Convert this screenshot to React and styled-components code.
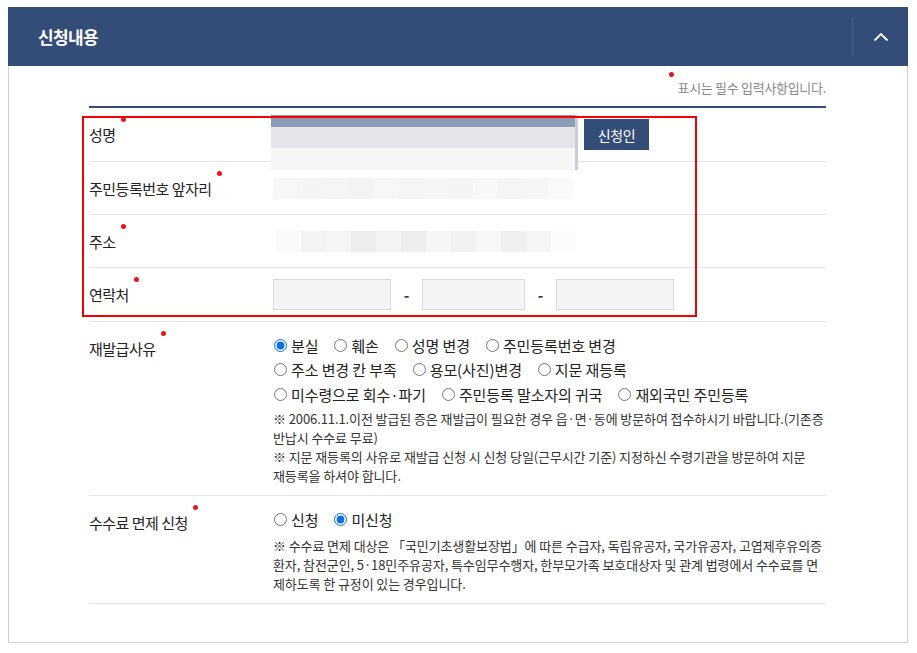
import React from 'react'
import styled, { createGlobalStyle } from 'styled-components'

const Global = createGlobalStyle`
body {
  margin: 0;
  background: #fff;
  font-family: 'Noto Sans CJK KR', 'Noto Sans', sans-serif;
  color: #222;
}
`

const Page = styled.div`
padding: 7px 9px 10px 8px;
`

const Panel = styled.section`
width: 900px;
height: 636px;
box-sizing: border-box;
border: 1px solid #cfcfcf;
border-top: none;
`

const Header = styled.div`
height: 59px;
background: #344c78;
display: flex;
align-items: center;
justify-content: space-between;
margin: 0 -1px;
`

const Title = styled.h2`
margin: 0 0 0 30px;
color: #fff;
font-size: 17px;
font-weight: 700;
letter-spacing: -0.6px;
`

const Toggle = styled.div`
width: 55px;
height: 38px;
border-left: 1px solid #4a5f88;
display: flex;
align-items: center;
justify-content: center;
`

const Body = styled.div`
padding: 0 81px 0 80px;
`

const Note = styled.p`
margin: 0;
height: 38px;
display: flex;
justify-content: flex-end;
align-items: center;
padding-top: 2px;
font-size: 13px;
color: #888;
letter-spacing: -0.3px;
`

const Dot = styled.span`
display: inline-block;
width: 5px;
height: 5px;
border-radius: 50%;
background: #e8141c;
margin: 0 4px 0 ${p => p.$gap || 3}px;
align-self: flex-start;
transform: translateY(${p => p.$up || 0}px);
`

const Table = styled.div`
position: relative;
border-top: 2px solid #344c78;
`

const Row = styled.div`
display: grid;
grid-template-columns: 184px 1fr;
border-bottom: 1px solid #e6e6e6;
min-height: ${p => p.$h || 52}px;
`

const Label = styled.div`
display: flex;
align-items: ${p => (p.$top ? 'flex-start' : 'center')};
padding-top: ${p => p.$pt || 0}px;
font-size: 15px;
color: #222;
letter-spacing: -0.5px;
`

const LabelText = styled.span`
display: inline-flex;
align-items: flex-start;
`

const Cell = styled.div`
display: flex;
align-items: ${p => p.$align || 'center'};
flex-direction: ${p => p.$col ? 'column' : 'row'};
padding: ${p => p.$pad || '0'};
`

const NameBox = styled.div`
width: 307px;
height: 55px;
align-self: flex-start;
margin: 7px 0 -9px -2px;
background: linear-gradient(90deg, transparent 304px, #c9cdd6 304px),
  linear-gradient(#8e9bb5 0 12px, #e3e5ea 12px 33px, #f6f6f7 33px 100%);
`

const Button = styled.button`
width: 65px;
height: 31px;
margin-left: 6px;
align-self: flex-start;
margin-top: 11px;
background: #344c78;
color: #fff;
border: none;
font-family: inherit;
font-size: 14px;
letter-spacing: -0.3px;
`

const Mosaic = styled.div`
display: grid;
grid-template-columns: repeat(${p => p.$cols}, ${p => p.$cell}px);
margin-left: ${p => p.$ml || 0}px;
`

const Px = styled.div`
height: 21px;
background: ${p => p.$c};
`

const PhoneInput = styled.div`
width: ${p => p.$w}px;
height: 31px;
box-sizing: border-box;
background: #f4f4f4;
border: 1px solid #dadada;
`

const Dash = styled.span`
width: 31px;
text-align: center;
font-size: 15px;
font-weight: 700;
color: #333;
`

const RadioLine = styled.div`
display: flex;
align-items: center;
gap: 15px;
height: 24.5px;
`

const Option = styled.label`
display: inline-flex;
align-items: center;
gap: 3px;
font-size: 15px;
color: #222;
letter-spacing: -0.1px;
`

const Radio = styled.input`
width: 13px;
height: 13px;
margin: 0 1px;
accent-color: #0b6fe8;
`

const Notes = styled.p`
margin: ${p => p.$mt || 0}px ${p => p.$mr ?? -3}px 0 0;
font-size: 13px;
line-height: 19px;
color: #333;
letter-spacing: -0.1px;
word-break: ${p => (p.$keep ? 'keep-all' : 'normal')};
`

const Highlight = styled.div`
position: absolute;
left: -7px;
top: 8px;
width: 615px;
height: 201px;
border: 2px solid #f50000;
box-sizing: border-box;
pointer-events: none;
`

const mosaicA = ['#f7f7f8', '#f4f4f5', '#f5f5f6', '#f3f3f4', '#f7f7f7', '#f5f5f6', '#f6f6f6', '#f4f4f5', '#f8f8f8', '#f5f5f5', '#f6f6f7', '#f9f9f9']
const mosaicB = ['#fafafa', '#f3f3f3', '#f5f5f5', '#ededed', '#f4f4f4', '#eeeeee', '#f6f6f6', '#f2f2f2', '#f7f7f7', '#f0f0f0', '#f5f5f5', '#fbfbfb']

function Req({ children, gap, up }) {
  return (
    <LabelText>
      {children}
      <Dot $gap={gap} $up={up} />
    </LabelText>
  )
}

export default function App() {
  return (
    <>
      <Global />
      <Page>
        <Panel>
          <Header>
            <Title>신청내용</Title>
            <Toggle>
              <svg width="16" height="10" viewBox="0 0 16 10" fill="none">
                <path d="M1.5 8.5L8 2l6.5 6.5" stroke="#fff" strokeWidth="1.8" />
              </svg>
            </Toggle>
          </Header>
          <Body>
            <Note>
              <Dot $up={4} />
              표시는 필수 입력사항입니다.
            </Note>
            <Table>
              <Row $h={53}>
                <Label><Req gap={5} up={-7}>성명</Req></Label>
                <Cell $align="flex-start">
                  <NameBox />
                  <Button>신청인</Button>
                </Cell>
              </Row>
              <Row>
                <Label><Req gap={5} up={-7}>주민등록번호 앞자리</Req></Label>
                <Cell>
                  <Mosaic $cols={12} $cell={25}>
                    {mosaicA.map((c, i) => <Px key={i} $c={c} />)}
                  </Mosaic>
                </Cell>
              </Row>
              <Row>
                <Label><Req gap={5} up={-7}>주소</Req></Label>
                <Cell>
                  <Mosaic $cols={12} $cell={25} $ml={3}>
                    {mosaicB.map((c, i) => <Px key={i} $c={c} />)}
                  </Mosaic>
                </Cell>
              </Row>
              <Row $h={53}>
                <Label><Req gap={5} up={-7}>연락처</Req></Label>
                <Cell>
                  <PhoneInput $w={118} />
                  <Dash>-</Dash>
                  <PhoneInput $w={103} />
                  <Dash>-</Dash>
                  <PhoneInput $w={118} />
                </Cell>
              </Row>
              <Row>
                <Label $top $pt={16}><Req gap={5} up={-7}>재발급사유</Req></Label>
                <Cell $col $align="flex-start" $pad="11px 0 10px">
                  <RadioLine>
                    <Option><Radio type="radio" name="r" defaultChecked />분실</Option>
                    <Option><Radio type="radio" name="r" />훼손</Option>
                    <Option><Radio type="radio" name="r" />성명 변경</Option>
                    <Option><Radio type="radio" name="r" />주민등록번호 변경</Option>
                  </RadioLine>
                  <RadioLine>
                    <Option><Radio type="radio" name="r" />주소 변경 칸 부족</Option>
                    <Option><Radio type="radio" name="r" />용모(사진)변경</Option>
                    <Option><Radio type="radio" name="r" />지문 재등록</Option>
                  </RadioLine>
                  <RadioLine>
                    <Option><Radio type="radio" name="r" />미수령으로 회수·파기</Option>
                    <Option><Radio type="radio" name="r" />주민등록 말소자의 귀국</Option>
                    <Option><Radio type="radio" name="r" />재외국민 주민등록</Option>
                  </RadioLine>
                  <Notes $mt={2} $keep>
                    ※ 2006.11.1.이전 발급된 증은 재발급이 필요한 경우 읍·면·동에 방문하여 접수하시기 바랍니다.(기존증 반납시 수수료 무료)
                    <br />
                    ※ 지문 재등록의 사유로 재발급 신청 시 신청 당일(근무시간 기준) 지정하신 수령기관을 방문하여 지문 재등록을 하셔야 합니다.
                  </Notes>
                </Cell>
              </Row>
              <Row>
                <Label $top $pt={16}><Req gap={5} up={-7}>수수료 면제 신청</Req></Label>
                <Cell $col $align="flex-start" $pad="12px 0 10px">
                  <RadioLine>
                    <Option><Radio type="radio" name="f" />신청</Option>
                    <Option><Radio type="radio" name="f" defaultChecked />미신청</Option>
                  </RadioLine>
                  <Notes $mt={4} $mr={2}>
                    ※ 수수료 면제 대상은 「국민기초생활보장법」에 따른 수급자, 독립유공자, 국가유공자, 고엽제후유의증 환자, 참전군인, 5·18민주유공자, 특수임무수행자, 한부모가족 보호대상자 및 관계 법령에서 수수료를 면제하도록 한 규정이 있는 경우입니다.
                  </Notes>
                </Cell>
              </Row>
              <Highlight />
            </Table>
          </Body>
        </Panel>
      </Page>
    </>
  )
}
